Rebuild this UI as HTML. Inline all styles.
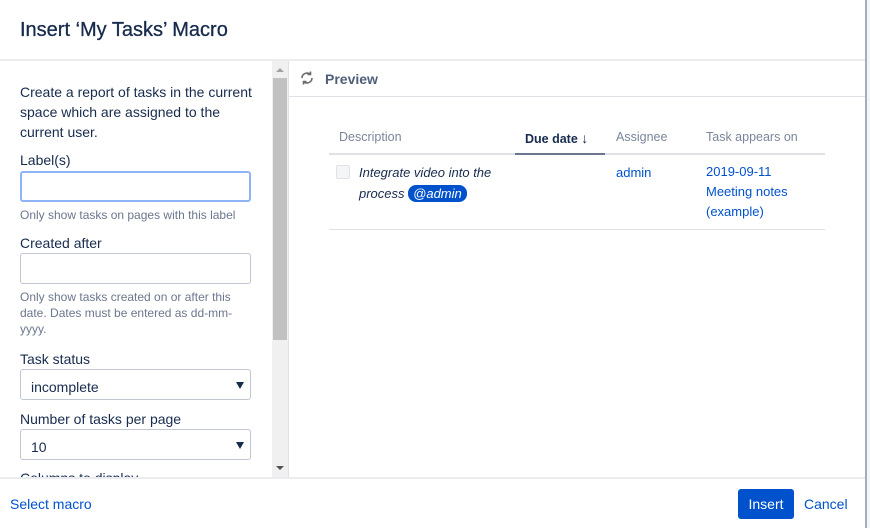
<!DOCTYPE html>
<html><head><style>
*{box-sizing:border-box;margin:0;padding:0}
body{width:870px;height:528px;overflow:hidden;background:#fff;font-family:"Liberation Sans",sans-serif;color:#172b4d;position:relative}
.abs{position:absolute}
.lbl{font-size:14px;color:#172b4d}
.inp{position:absolute;left:20px;width:231px;height:31px;border:1px solid #c1c7d0;border-radius:3px;background:#fff}
.hint{font-size:12px;color:#6b778c;line-height:16px}
.sel{font-size:14px;padding:9px 0 0 10px}
.sel:after{content:"";position:absolute;right:6px;top:12px;border-left:4px solid transparent;border-right:4px solid transparent;border-top:7px solid #172b4d}
.th{position:absolute;top:130px;font-size:12.5px;color:#7a869a}
a,.lk{color:#0052cc}
</style></head><body>
<div class="abs" style="left:20px;top:19px;font-size:20px;color:#172b4d;-webkit-text-stroke:0.3px #172b4d">Insert ‘My Tasks’ Macro</div>
<div class="abs" style="left:0;top:59px;width:865px;height:2px;background:#ebecf0"></div>
<div class="abs" style="left:865px;top:0;width:2px;height:528px;background:#a5adba"></div>
<div class="abs" style="left:867px;top:0;width:3px;height:528px;background:#f4f5f7"></div>
<!-- left panel -->
<div class="abs lbl" style="left:20px;top:82px;line-height:20px;width:240px">Create a report of tasks in the current space which are assigned to the current user.</div>
<div class="abs lbl" style="left:20px;top:152px">Label(s)</div>
<div class="inp" style="top:171px;border:2px solid #8fb4f5"></div>
<div class="abs hint" style="left:20px;top:207px">Only show tasks on pages with this label</div>
<div class="abs lbl" style="left:20px;top:235px">Created after</div>
<div class="inp" style="top:253px"></div>
<div class="abs hint" style="left:20px;top:289px;width:235px">Only show tasks created on or after this date. Dates must be entered as dd-mm-yyyy.</div>
<div class="abs lbl" style="left:20px;top:351px">Task status</div>
<div class="inp sel" style="top:369px">incomplete</div>
<div class="abs lbl" style="left:20px;top:411px">Number of tasks per page</div>
<div class="inp sel" style="top:429px">10</div>
<div class="abs lbl" style="left:20px;top:470px;height:7px;overflow:hidden">Columns to display</div>
<!-- scrollbar -->
<div class="abs" style="left:272px;top:61px;width:16px;height:416px;background:#f0f0f0"></div>
<div class="abs" style="left:273px;top:78px;width:14px;height:262px;background:#c1c1c1"></div>
<div class="abs" style="left:276px;top:68px;border-left:4px solid transparent;border-right:4px solid transparent;border-bottom:4px solid #a3a3a3"></div>
<div class="abs" style="left:276px;top:466px;border-left:4px solid transparent;border-right:4px solid transparent;border-top:4px solid #505050"></div>
<div class="abs" style="left:288px;top:61px;width:1px;height:416px;background:#dfe1e6"></div>
<!-- preview -->
<svg class="abs" style="left:299px;top:70px" width="16" height="16" viewBox="0 0 16 16" fill="none" stroke="#6b6b6b" stroke-width="1.6"><path d="M3 8a5 5 0 0 1 8.5-3.5M13 8a5 5 0 0 1-8.5 3.5"/><path d="M11.5 1.5v3h-3M4.5 14.5v-3h3"/></svg>
<div class="abs" style="left:325px;top:71px;font-size:14px;font-weight:bold;color:#505f79">Preview</div>
<div class="abs" style="left:289px;top:96px;width:576px;height:1px;background:#dfe1e6"></div>
<div class="th" style="left:339px">Description</div>
<div class="th" style="left:525px;color:#172b4d;font-weight:bold">Due date <span style="font-size:14px">&#8595;</span></div>
<div class="th" style="left:616px">Assignee</div>
<div class="th" style="left:706px">Task appears on</div>
<div class="abs" style="left:329px;top:153px;width:496px;height:2px;background:#dfe1e6"></div>
<div class="abs" style="left:515px;top:153px;width:90px;height:2px;background:#6b778c"></div>
<div class="abs" style="left:336px;top:165px;width:14px;height:14px;border:1px solid #dfe1e6;background:#f4f5f7;border-radius:2px"></div>
<div class="abs" style="left:359px;top:162px;font-size:13px;font-style:italic;line-height:21px">Integrate video into the<br>process <span style="background:#0052cc;color:#fff;border-radius:8px;padding:1px 5px">@admin</span></div>
<div class="abs lk" style="left:616px;top:162px;font-size:13px;line-height:21px">admin</div>
<div class="abs lk" style="left:706px;top:162px;font-size:13px;line-height:20px">2019-09-11<br>Meeting notes<br>(example)</div>
<div class="abs" style="left:329px;top:229px;width:496px;height:1px;background:#dfe1e6"></div>
<!-- footer -->
<div class="abs" style="left:0;top:477px;width:865px;height:2px;background:#ebecf0"></div>
<div class="abs lk" style="left:10px;top:496px;font-size:14px">Select macro</div>
<div class="abs" style="left:738px;top:489px;width:56px;height:30px;background:#0052cc;border-radius:3px;color:#fff;font-size:14px;text-align:center;line-height:30px">Insert</div>
<div class="abs lk" style="left:804px;top:496px;font-size:14px">Cancel</div>
</body></html>
